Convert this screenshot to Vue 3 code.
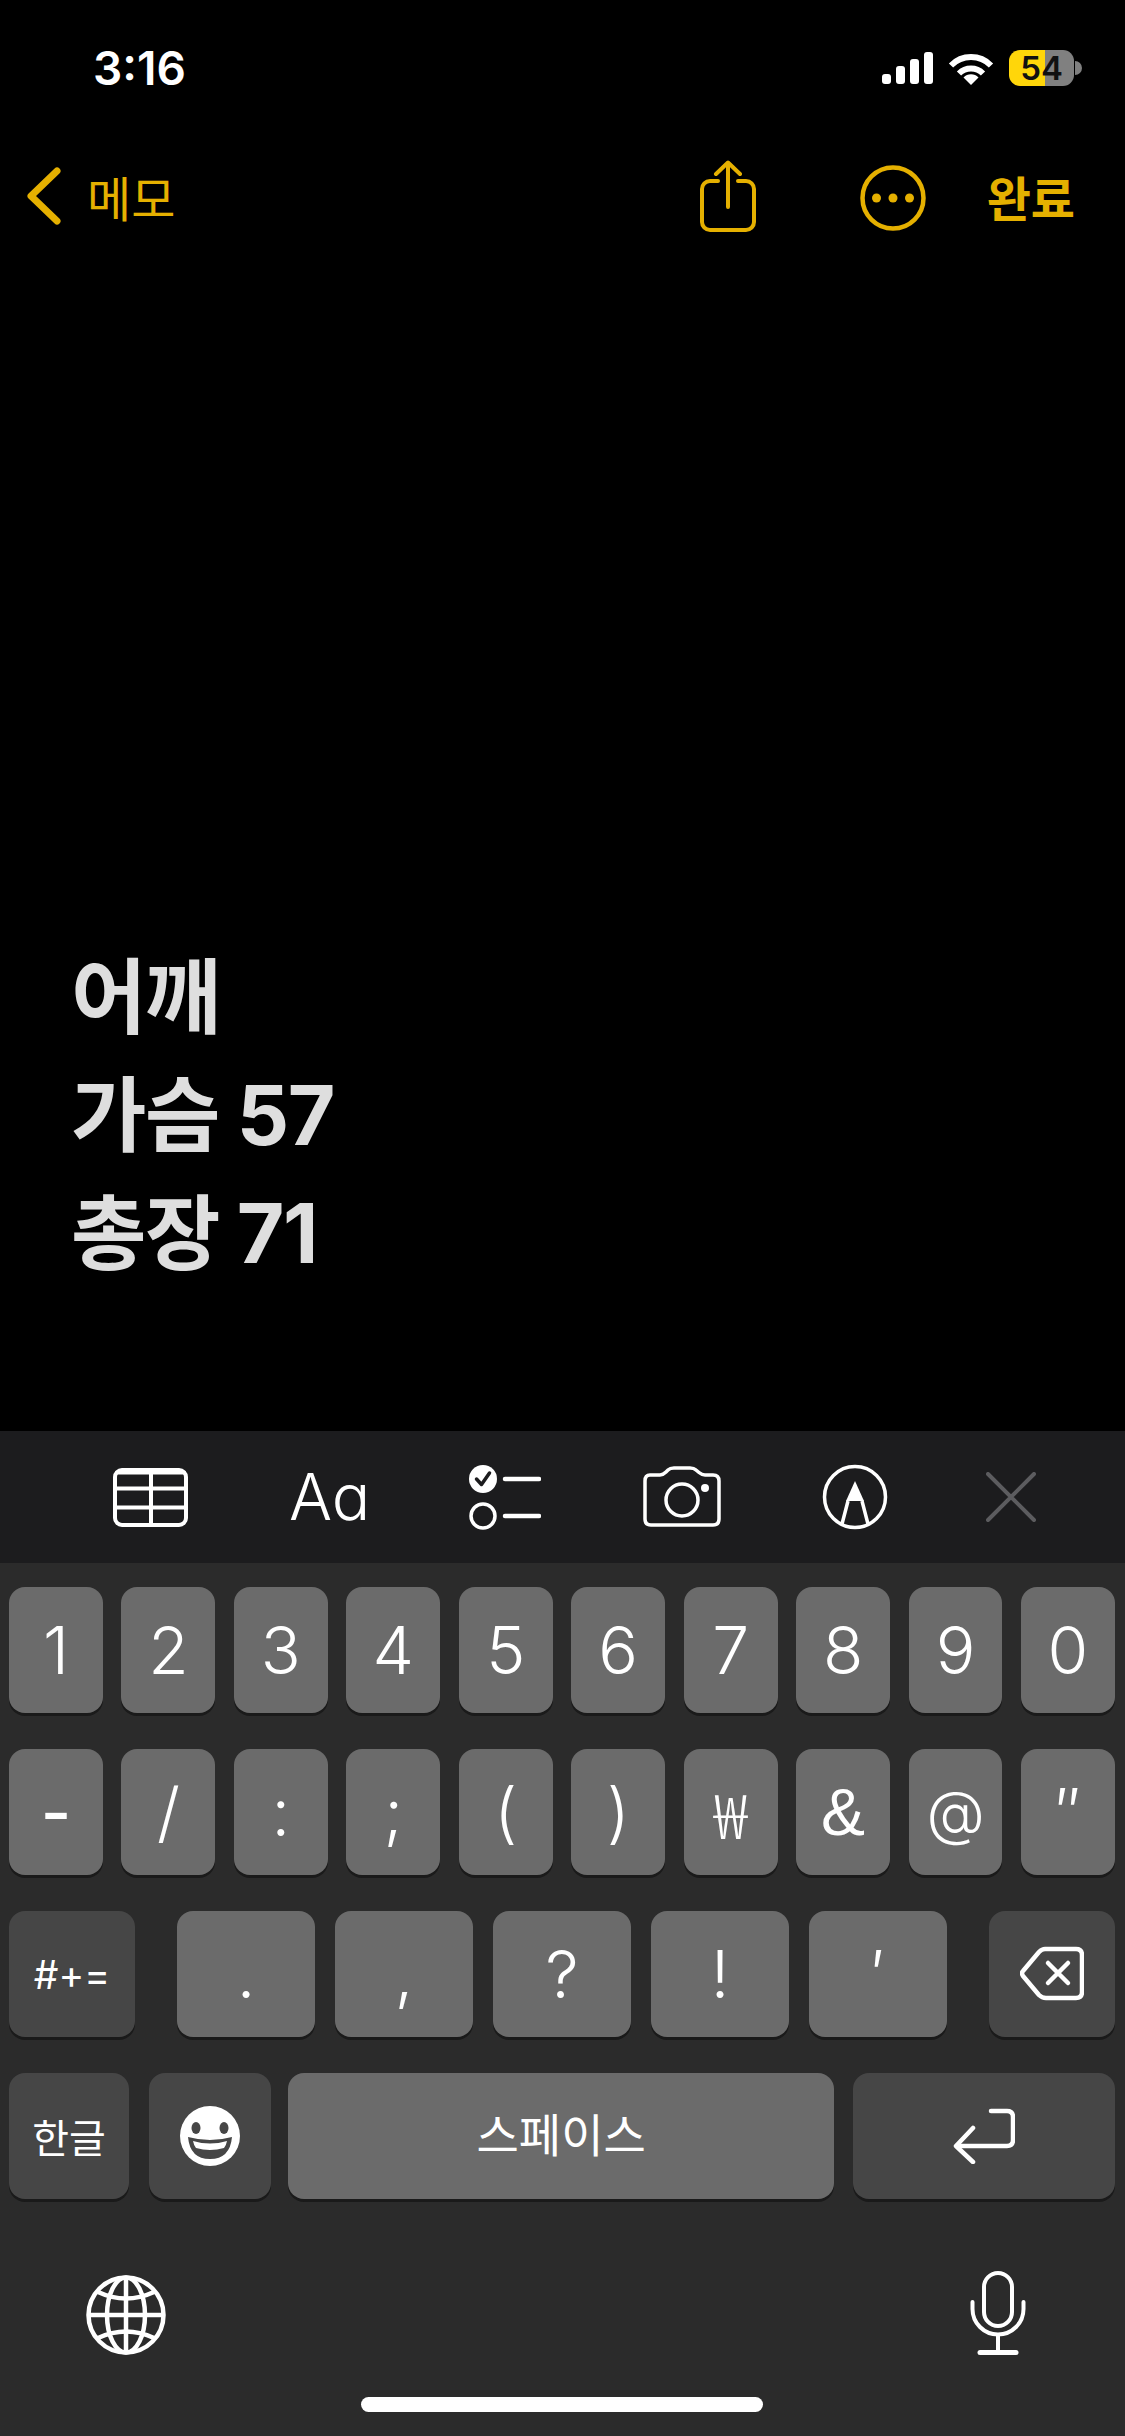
<script setup>
const numberKeys = ['1', '2', '3', '4', '5', '6', '7', '8', '9', '0'];
const symbolKeys = [
  { label: '-', cls: 'key-dash' },
  { label: '/' },
  { label: ':' },
  { label: ';' },
  { label: '(' },
  { label: ')' },
  { label: '₩', cls: 'key-won' },
  { label: '&', cls: 'key-amp' },
  { label: '@', cls: 'key-at' },
  { label: '″' },
];
const punctKeys = ['.', ',', '?', '!', '′'];
const signalBars = [
  { x: 0, h: 10 },
  { x: 14, h: 18 },
  { x: 28, h: 25 },
  { x: 42, h: 32 },
];
const noteLines = ['어깨', '가슴 57', '총장 71'];
</script>

<template>
  <div class="screen">
    <div class="status">
      <span class="time">3:16</span>
      <div class="status-right">
        <svg class="signal" width="51" height="32" viewBox="0 0 51 32">
          <rect v-for="bar in signalBars" :key="bar.x" :x="bar.x" :y="32 - bar.h" width="9" :height="bar.h" rx="3" fill="#fff" />
        </svg>
        <svg class="wifi" width="46" height="33" viewBox="0 0 46 33" fill="none" stroke="#fff" stroke-width="6">
          <path d="M3 13.5A28 28 0 0 1 43 13.5" />
          <path d="M11 21.5A17 17 0 0 1 35 21.5" />
          <path d="M23 33L15.5 25.5A10.5 10.5 0 0 1 30.5 25.5Z" fill="#fff" stroke="none" />
        </svg>
        <div class="battery">54</div>
        <div class="battery-nub"></div>
      </div>
    </div>

    <div class="nav">
      <svg width="34" height="58" viewBox="0 0 34 58" fill="none" stroke="#e5b000" stroke-width="7" stroke-linecap="round" stroke-linejoin="round">
        <path d="M30 4L4 29L30 54" />
      </svg>
      <span class="nav-back">메모</span>
      <svg class="nav-share" width="56" height="72" viewBox="0 0 56 72" fill="none" stroke="#e5b000" stroke-width="4" stroke-linecap="round" stroke-linejoin="round">
        <path d="M18 21H10a8 8 0 0 0-8 8V62a8 8 0 0 0 8 8H46a8 8 0 0 0 8-8V29a8 8 0 0 0-8-8H38" />
        <path d="M28 47V3M16 14L28 2.5L40 14" />
      </svg>
      <svg class="nav-more" width="66" height="66" viewBox="0 0 66 66">
        <circle cx="33" cy="33" r="30.5" fill="none" stroke="#e5b000" stroke-width="4.5" />
        <circle cx="16.5" cy="33" r="4.5" fill="#e5b000" />
        <circle cx="33" cy="33" r="4.5" fill="#e5b000" />
        <circle cx="49.5" cy="33" r="4.5" fill="#e5b000" />
      </svg>
      <span class="nav-done">완료</span>
    </div>

    <div class="note">
      <div v-for="line in noteLines" :key="line" class="note-line">{{ line }}</div>
    </div>

    <div class="toolbar">
      <svg class="tool-table" width="75" height="59" viewBox="0 0 75 59" fill="none" stroke="#fff" stroke-width="4">
        <rect x="2" y="2" width="71" height="55" rx="7" />
        <path d="M2 5H73" stroke-width="3" />
        <path d="M2 20.5H73M2 39.5H73M38 2V57" />
      </svg>
      <span class="tool-aa">Aa</span>
      <svg class="tool-list" width="72" height="66" viewBox="0 0 72 66">
        <circle cx="14" cy="15" r="14" fill="#fff" />
        <path d="M7.5 15L12.5 20.5L20.5 9" fill="none" stroke="#1c1c1e" stroke-width="3.5" stroke-linecap="round" stroke-linejoin="round" />
        <circle cx="14" cy="52" r="12" fill="none" stroke="#fff" stroke-width="3.5" />
        <path d="M36 15H70M36 52H70" stroke="#fff" stroke-width="4.5" stroke-linecap="round" />
      </svg>
      <svg class="tool-camera" width="78" height="62" viewBox="0 0 78 62" fill="none" stroke="#fff" stroke-width="3.5">
        <path d="M7 9H17Q20 9 23 6L25 4Q27 2 31 2H47Q51 2 53 4L56 6.5Q59 9 62 9H70Q76 9 76 15V53Q76 59 70 59H8Q2 59 2 53V15Q2 9 7 9Z" />
        <circle cx="39" cy="34" r="16" />
        <circle cx="62" cy="22" r="4" fill="#fff" stroke="none" />
      </svg>
      <svg class="tool-markup" width="66" height="66" viewBox="0 0 66 66" fill="none" stroke="#fff" stroke-width="3.5">
        <circle cx="33" cy="33" r="30.5" />
        <path d="M33 17L42 37H24Z" fill="#fff" stroke="none" />
        <path d="M26 37L20 60M40 37L46 60" />
      </svg>
      <svg class="tool-close" width="50" height="50" viewBox="0 0 50 50" stroke="#5c5c5f" stroke-width="4" stroke-linecap="round">
        <path d="M2 2L48 48M48 2L2 48" />
      </svg>
    </div>

    <div class="keyboard">
      <div class="row">
        <div v-for="k in numberKeys" :key="k" class="key">{{ k }}</div>
      </div>
      <div class="row">
        <div v-for="k in symbolKeys" :key="k.label" class="key" :class="k.cls">{{ k.label }}</div>
      </div>
      <div class="row row-between">
        <div class="key key-dark key-shift">#+=</div>
        <div class="punct">
          <div v-for="k in punctKeys" :key="k" class="key">{{ k }}</div>
        </div>
        <div class="key key-dark key-back">
          <svg width="64" height="56" viewBox="0 0 64 56" fill="none" stroke="#fff" stroke-width="4.5" stroke-linecap="round" stroke-linejoin="round">
            <path d="M25 3H56Q62 3 62 9V46Q62 52 56 52H26Q22 52 19 49L3 30Q1 27 3 25L19 6Q22 3 25 3Z" />
            <path d="M28 17L48 37M48 17L28 37" />
          </svg>
        </div>
      </div>
      <div class="row">
        <div class="key key-dark key-lang">한글</div>
        <div class="key key-dark key-emoji">
          <svg width="60" height="60" viewBox="0 0 60 60">
            <circle cx="30" cy="30" r="30" fill="#fff" />
            <ellipse cx="16" cy="22" rx="4.5" ry="6" fill="#464646" />
            <ellipse cx="44" cy="22" rx="4.5" ry="6" fill="#464646" />
            <path d="M8 31Q30 37 52 31Q50 53 30 53Q10 53 8 31Z" fill="#464646" />
            <path d="M13 35Q30 40 47 35Q46 40 44 42Q30 46 16 42Q14 40 13 35Z" fill="#fff" />
          </svg>
        </div>
        <div class="key key-space">스페이스</div>
        <div class="key key-dark key-return">
          <svg width="62" height="56" viewBox="0 0 62 56" fill="none" stroke="#fff" stroke-width="4.5" stroke-linecap="round" stroke-linejoin="round">
            <path d="M38 3H54Q60 3 60 9V32Q60 38 54 38H4" />
            <path d="M20 20L3 38L20 54" />
          </svg>
        </div>
      </div>

      <div class="bottom">
        <svg width="80" height="80" viewBox="0 0 80 80" fill="none" stroke="#fff" stroke-width="4.5">
          <circle cx="40" cy="40" r="37.5" />
          <ellipse cx="40" cy="40" rx="19" ry="37.5" />
          <path d="M40 2.5V77.5M2.5 40H77.5" />
          <path d="M12 17Q40 30 68 17M12 63Q40 50 68 63" />
        </svg>
        <svg width="56" height="84" viewBox="0 0 56 84" fill="none" stroke="#fff" stroke-width="4" stroke-linecap="round">
          <rect x="14" y="2" width="28" height="53" rx="14" />
          <path d="M2.500 31V38A25.500 25.500 0 0 0 53.500 38V31" />
          <path d="M28 64V80" />
          <path d="M10 81.500H46" stroke-width="5" />
        </svg>
      </div>
      <div class="home-bar"></div>
    </div>
  </div>
</template>

<style scoped>
.screen {
  width: 1125px;
  height: 2436px;
  display: flex;
  flex-direction: column;
  overflow: hidden;
  background: #000;
  font-family: Inter, "Noto Sans CJK KR", sans-serif;
  color: #fff;
}

.status {
  height: 136px;
  flex-shrink: 0;
  display: flex;
  align-items: center;
  justify-content: space-between;
  padding: 0 43px 0 93px;
}
.time {
  font-size: 46px;
  font-weight: 600;
}
.status-right {
  display: flex;
  align-items: center;
}
.wifi {
  margin-left: 15px;
}
.battery {
  width: 65px;
  height: 36px;
  margin-left: 15px;
  border-radius: 11px;
  background: linear-gradient(to right, #ffd60a 55%, #808080 55%);
  color: #111;
  font-size: 33px;
  font-weight: 600;
  line-height: 36px;
  text-align: center;
}
.battery-nub {
  width: 7px;
  height: 14px;
  margin-left: 1px;
  border-radius: 0 7px 7px 0;
  background: #808080;
}

.nav {
  height: 120px;
  flex-shrink: 0;
  display: flex;
  align-items: center;
  padding: 0 50px 0 27px;
  color: #e5b000;
}
.nav-back {
  margin-left: 26px;
  font-size: 48px;
}
.nav-share {
  margin-left: auto;
}
.nav-more {
  margin-left: 104px;
  margin-top: 4px;
}
.nav-done {
  margin-left: 61px;
  font-size: 48px;
  font-weight: 600;
}

.note {
  flex: 1;
  display: flex;
  flex-direction: column;
  justify-content: flex-end;
  padding: 0 0 138px 71px;
}
.note-line {
  font-size: 82px;
  font-weight: 700;
  letter-spacing: -1.500px;
  line-height: 118px;
  color: #dedede;
}

.toolbar {
  height: 132px;
  flex-shrink: 0;
  display: flex;
  align-items: center;
  padding-left: 113px;
  background: #1c1c1e;
}
.tool-aa {
  margin-left: 101px;
  width: 78px;
  font-size: 64px;
  font-weight: 300;
  font-feature-settings: "cv11";
  line-height: 1;
}
.tool-list {
  margin-left: 102px;
}
.tool-camera {
  margin-left: 102px;
}
.tool-markup {
  margin-left: 101px;
}
.tool-close {
  margin-left: 98px;
}

.keyboard {
  height: 873px;
  flex-shrink: 0;
  display: flex;
  flex-direction: column;
  gap: 36px;
  padding: 24px 10px 0 9px;
  box-sizing: border-box;
  background: #2b2b2b;
}
.row {
  display: flex;
  gap: 18.600px;
}
.row-between {
  justify-content: space-between;
  gap: 0;
}
.punct {
  display: flex;
  gap: 20px;
}
.key {
  flex: 1;
  height: 126px;
  display: flex;
  align-items: center;
  justify-content: center;
  border-radius: 16px;
  background: #6b6b6b;
  box-shadow: 0 3px 0 #1a1a1a;
  font-size: 66px;
  font-weight: 300;
}
.punct .key {
  flex: none;
  width: 138px;
}
.key-dash {
  font-weight: 500;
}
.key-won {
  font-family: "Noto Sans CJK KR", sans-serif;
  font-size: 62px;
}
.key-amp {
  font-family: "Liberation Sans", sans-serif;
}
.key-at {
  font-size: 60px;
}
.key-dark {
  flex: none;
  background: #464646;
}
.key-shift {
  width: 126px;
  font-size: 39px;
  font-weight: 400;
}
.key-back {
  width: 126px;
}
.key-lang {
  width: 120px;
  font-size: 40px;
  font-weight: 400;
}
.key-emoji {
  width: 122px;
  margin-left: 1.400px;
  margin-right: -1.600px;
}
.key-space {
  font-size: 46px;
  font-weight: 400;
  padding-bottom: 8px;
  box-sizing: border-box;
}
.key-return {
  width: 262px;
}
.bottom {
  display: flex;
  align-items: flex-end;
  justify-content: space-between;
  margin-top: 36px;
  padding: 0 89px 0 77px;
}
.home-bar {
  align-self: center;
  width: 402px;
  height: 15px;
  margin-top: 6px;
  border-radius: 8px;
  background: #fff;
}
</style>
